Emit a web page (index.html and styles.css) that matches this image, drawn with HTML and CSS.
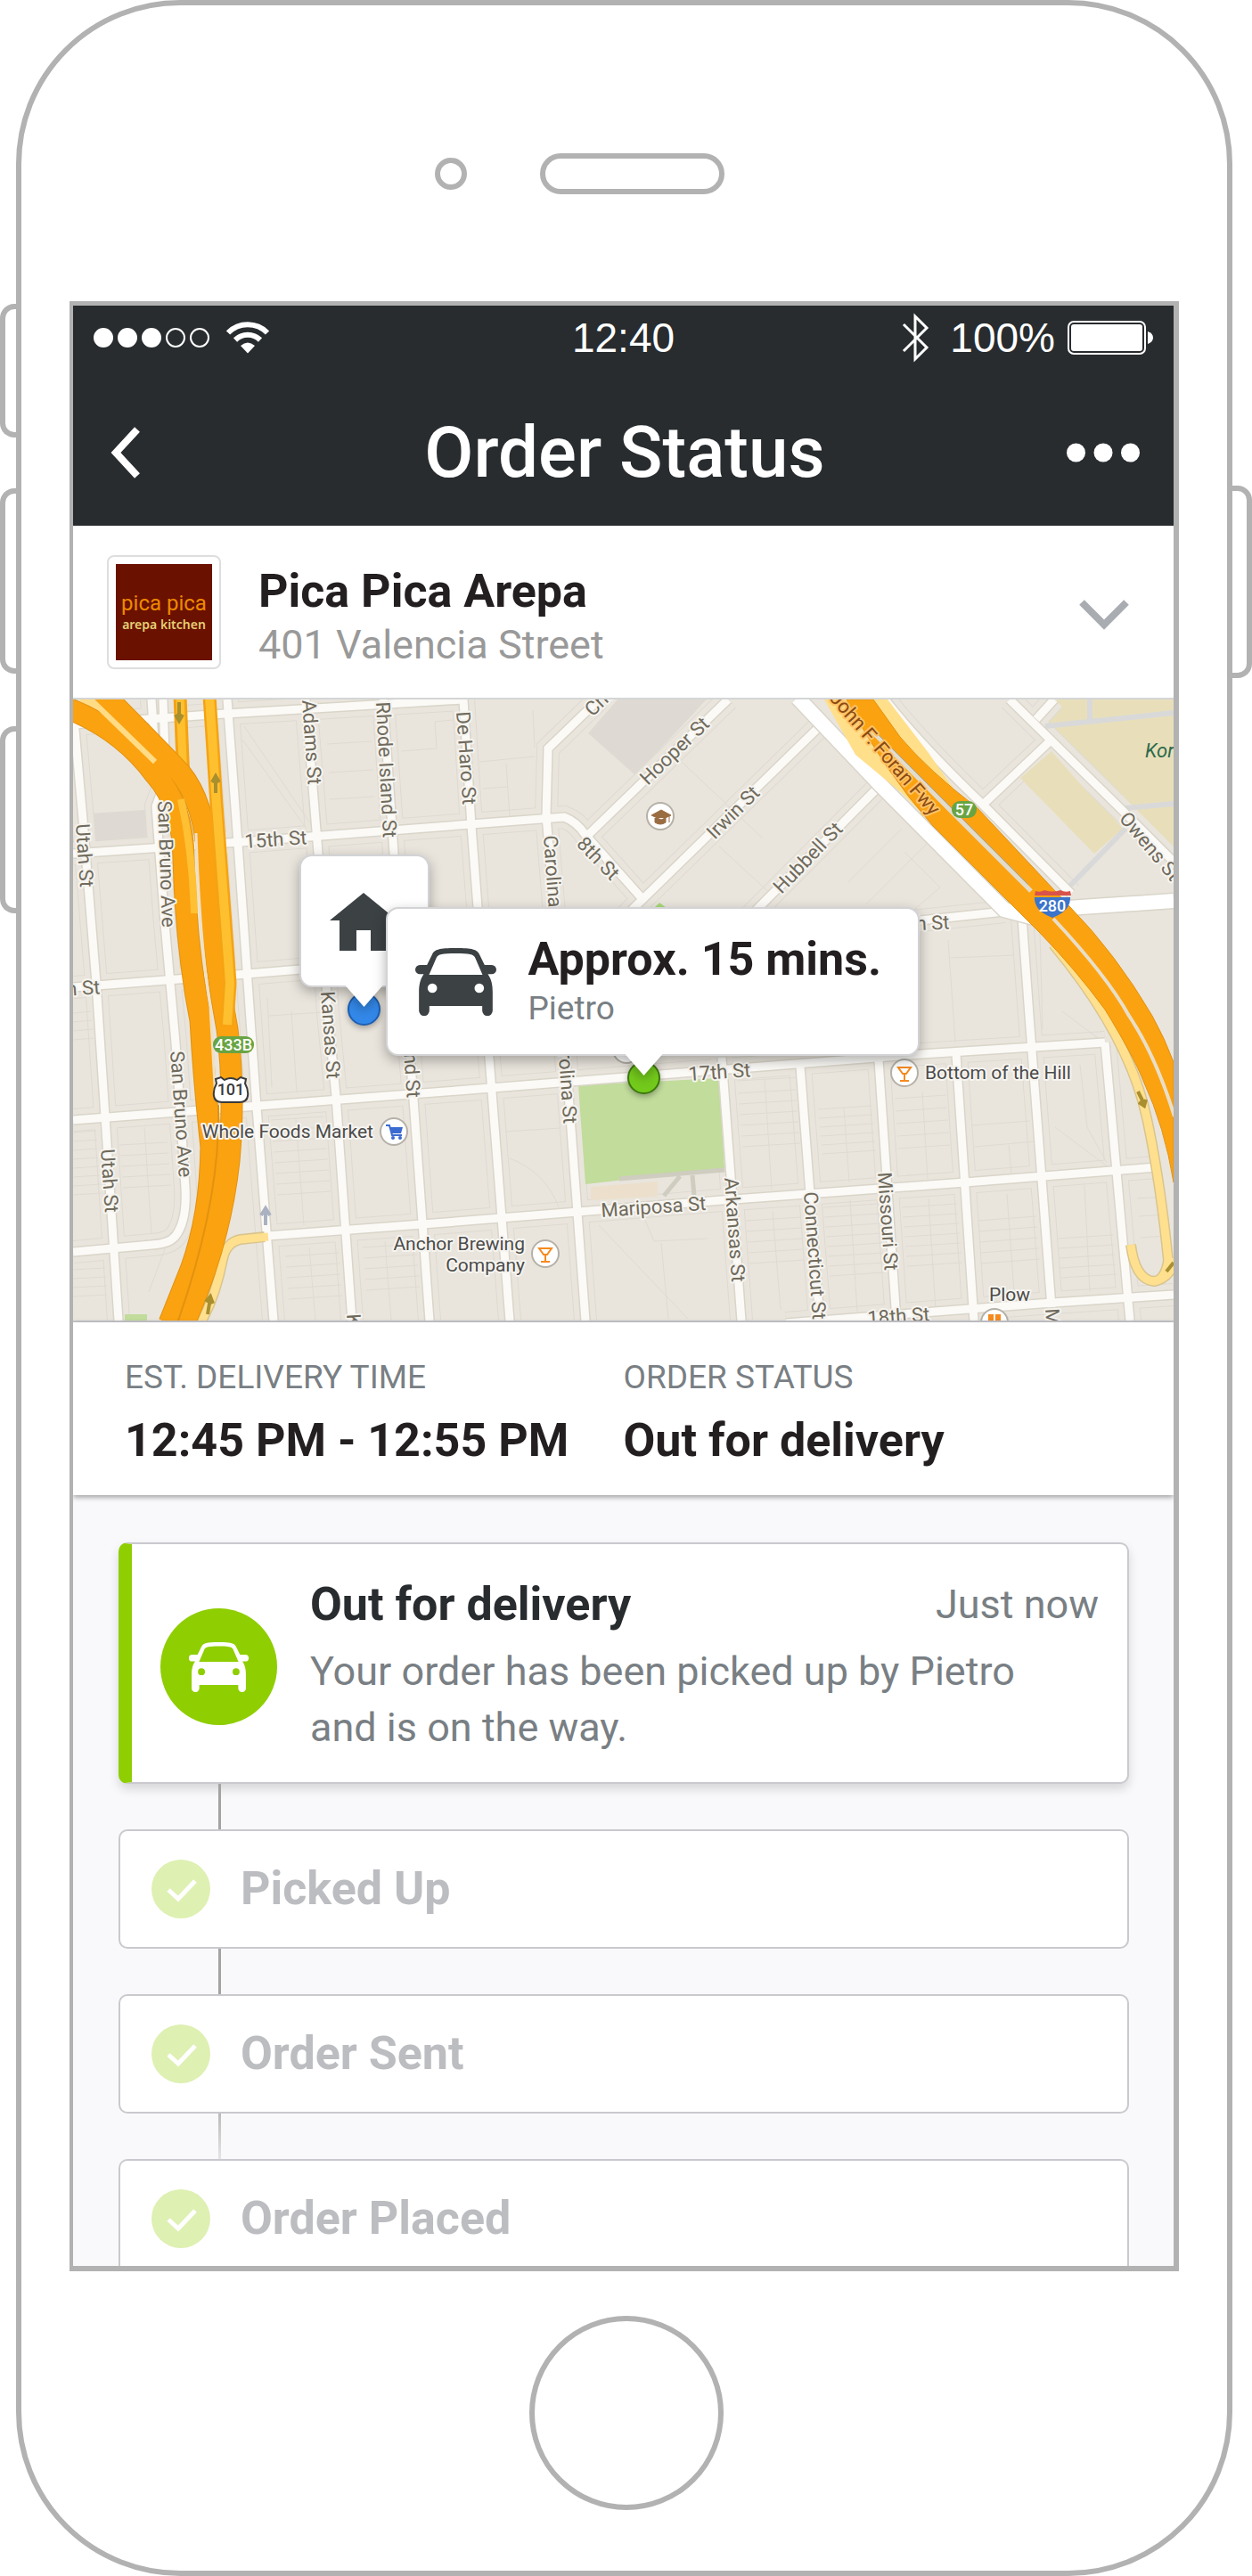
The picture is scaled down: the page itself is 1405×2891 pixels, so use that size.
FILE: index.html
```html
<!DOCTYPE html>
<html lang="en">
<head>
<meta charset="utf-8">
<meta name="viewport" content="width=device-width, initial-scale=1">
<title>Order Status</title>
<link rel="stylesheet" href="styles.css">
</head>
<body>
<svg width="0" height="0" class="sprite" aria-hidden="true">
  <symbol id="car" viewBox="0 0 272 228">
    <path fill-rule="evenodd" d="M136 0C80 0 65 5 57 20L39 57H15A15 15 0 0 0 15 88H28C15 108 12 125 12 150V211A17 17 0 0 0 47 211V195H225V211A17 17 0 0 0 260 211V150C260 125 257 108 244 88H257A15 15 0 0 0 257 57H233L215 20C207 5 192 0 136 0ZM136 18C90 18 76 21 71 32L46 90H226L201 32C196 21 182 18 136 18ZM41 135A16 16 0 1 0 73 135A16 16 0 1 0 41 135ZM199 135A16 16 0 1 0 231 135A16 16 0 1 0 199 135Z"/>
  </symbol>
  <symbol id="check" viewBox="0 0 66 66"><path d="M19 34L30 44L49 24" fill="none" stroke="#fff" stroke-width="5"/></symbol>
</svg>
<div class="phone">
  <span class="side side-mute"></span>
  <span class="side side-up"></span>
  <span class="side side-down"></span>
  <span class="side side-power"></span>
  <div class="earpiece"><span class="camera"></span><span class="speaker"></span></div>

  <main class="screen">
    <header class="topbar">
      <div class="status">
        <div class="status-left">
          <span class="signal"><i></i><i></i><i></i><i class="off"></i><i class="off"></i></span>
          <svg width="50" height="36" viewBox="0 0 50 36" fill="none" stroke="#fff" stroke-width="6"><path d="M3 12.500A31 31 0 0 1 47 12.500"/><path d="M11 20.500A20 20 0 0 1 39 20.500"/><path d="M17 27Q25 20 33 27L25 35.500Z" fill="#fff" stroke="none"/></svg>
        </div>
        <time class="clock">12:40</time>
        <div class="status-right">
          <svg width="32" height="56" viewBox="0 0 32 56" fill="none" stroke="#fff" stroke-width="3"><path d="M2 13L28 39L15 52V4L28 17L2 43"/></svg>
          <span class="percent">100%</span>
          <svg width="96" height="38" viewBox="0 0 96 38"><rect x="1" y="1" width="86" height="36" rx="6" fill="none" stroke="#fff" stroke-width="2"/><rect x="4" y="4" width="80" height="30" rx="3" fill="#fff"/><path d="M90 12Q96 14 96 19T90 26Z" fill="#fff"/></svg>
        </div>
      </div>
      <div class="nav">
        <button class="icon-btn" aria-label="Back"><svg width="36" height="58" viewBox="0 0 36 58"><path d="M31 3L7 29L31 55" fill="none" stroke="#fff" stroke-width="8"/></svg></button>
        <h1>Order Status</h1>
        <button class="icon-btn" aria-label="More"><svg width="82" height="22" viewBox="0 0 82 22" fill="#fff"><circle cx="10.500" cy="11" r="10.500"/><circle cx="41" cy="11" r="10.500"/><circle cx="71.500" cy="11" r="10.500"/></svg></button>
      </div>
    </header>

    <section class="restaurant">
      <div class="logo"><div class="logo-art"><span class="logo-name">pica pica</span><span class="logo-sub">arepa kitchen</span></div></div>
      <div class="who"><h2>Pica Pica Arepa</h2><p>401 Valencia Street</p></div>
      <button class="icon-btn" aria-label="Show details"><svg width="56" height="42" viewBox="0 0 56 42"><path d="M3 10L28 35L53 10" fill="none" stroke="#a9adb2" stroke-width="8"/></svg></button>
    </section>

    <section class="map" aria-label="Delivery map">
      <svg class="map-art" viewBox="0 0 1235 697" preserveAspectRatio="xMidYMid slice">
        <defs>
          <g id="streets">
            <path d="M-1 0L11 135L26 318L36 468L51 697"/>
            <path d="M88 0L92 60M101 0L104 90L93 120L103 252L115 385L126 548Q128 585 115 602Q108 611 88 612L0 620"/>
            <path d="M173 0L185 162L206 458L225 697"/>
            <path d="M261 0L275 172L286 352L295 445L313 697"/>
            <path d="M348 0L360 172L381 435L400 697"/>
            <path d="M438 0L447 142L467 402L490 697"/>
            <path d="M590 0L533 55L531 130L553 402L575 697"/>
            <path d="M728 402L738 535L750 697M816 412L838 697M904 405L924 697M991 398L1011 697"/>
            <path d="M1065 245L1073 355L1098 682M1158 385L1186 697"/>
            <path d="M0 28L155 17L438 0"/>
            <path d="M0 173L188 160L446 140L551 132Q565 137 575 152L640 225"/>
            <path d="M0 323L195 308L255 303L620 275L951 248L1045 238"/>
            <path d="M0 472L221 455L418 440L671 420L951 398L1158 385"/>
            <path d="M218 602L418 587L728 562L1001 542L1215 525"/>
            <path d="M800 700L928 690L1085 678L1235 668"/>
            <path d="M735 0L578 152M838 30L620 243M905 97L760 243"/>
            <path d="M911 0Q950 50 1021 118L1120 218M1021 118L1095 48M1051 0L1178 125L1235 182M1081 22L1101 0"/>
          </g>
        </defs>
        <rect width="1235" height="697" fill="#e9e5dd"/>
        <path d="M611 0H711L631 85L578 38ZM18 128L95 123V165L21 168Z" fill="#dedad3"/>
        <path d="M1098 53L1178 145L1146 173L1063 88ZM1085 22L1105 0H1235V175L1180 120Z" fill="#e8dfba"/>
        <use href="#streets" fill="none" stroke="#dedad1" stroke-width="26"/>
        <use href="#streets" fill="none" stroke="#e9e5dd" stroke-width="24"/>
        <path d="M1098 58L1170 140L1146 173L1063 88ZM1100 25L1115 0H1235V165L1180 110Z" fill="#e8dfba"/>
        <g class="lots">
          <path d="M0 352l20 -2m-20 12l21 -2m-21 12l22 -2m-22 12l23 -2M0 486l26 -2m-26 12l27 -2m-27 12l27 -2m-27 12l28 -2m-28 12l29 -2m-29 12l30 -2m-30 12l31 -2m-31 12l32 -2M0 640l36 -2m-36 12l37 -2m-37 12l38 -2m-38 12l38 -2"/>
          <path d="M52 500l54 -3m-53 15l54 -3m-53 15l54 -3m-53 15l54 -3m-53 15l54 -3M80 480l8 120M110 598L85 665"/>
          <path d="M222 472l60 -4m-59 16l60 -4m-59 16l60 -4m-59 16l60 -4m-59 16l60 -4m-59 16l60 -4m-59 16l60 -4m-59 16l60 -4M250 470l9 120M220 355l60 -4M218 335l5 100M245 350l6 90"/>
          <path d="M238 625l60 -4m-59 16l60 -4m-59 16l60 -4m-59 16l60 -4m-59 16l60 -4M265 615l7 82M325 615l60 -4m-59 16l60 -4m-59 16l60 -4m-59 16l60 -4m-59 16l60 -4M350 608l7 89"/>
          <path d="M192 30l75 110M190 45l72 100M285 50l50 -3M287 82l50 -3M288 112l50 -3M368 58l40 -3l-2 -30l20 -2"/>
          <path d="M456 70l62 -6M460 100l27 -2M486 72l4 60M516 12l2 42M485 485l62 -4M490 515Q530 530 545 570"/>
          <path d="M745 428l70 -4m-69 18l65 -4m-64 16l65 -4m-64 16l65 -4m-64 16l65 -4m-64 16l65 -4m-64 16l65 -4M776 425l8 125"/>
          <path d="M836 460l60 -4m-59 14l60 -4m-59 14l60 -4m-59 14l60 -4m-59 14l60 -4m-59 14l60 -4M865 458l6 84M842 570l62 -4m-61 15l62 -4m-61 15l62 -4m-61 15l62 -4m-61 15l62 -4m-61 15l62 -4m-61 15l62 -4m-61 15l62 -4M872 562l8 125"/>
          <path d="M922 448l58 -4m-57 18l58 -4m-57 18l58 -4m-57 18l58 -4m-57 18l58 -4M953 440l6 98M930 570l62 -4m-61 15l62 -4m-61 15l62 -4m-61 15l62 -4m-61 15l62 -4m-61 15l62 -4m-61 15l62 -4M960 560l8 125"/>
          <path d="M1008 478l66 -5M1012 502l68 -6M1050 500l3 32M1102 480l60 45M1130 410l8 70l22 40M1015 585l66 -5m-65 17l66 -5m-65 17l66 -5m-65 17l66 -5m-65 17l66 -5M1048 555l8 110"/>
          <path d="M1105 605l62 -4m-61 15l62 -4m-61 15l62 -4m-61 15l62 -4m-61 15l62 -4M1135 545l6 120M1194 560l30 -2M1196 580l30 -2M1198 604l30 -2"/>
          <path d="M755 585l62 -4m-61 16l62 -4m-61 16l62 -4m-61 16l62 -4m-61 16l62 -4M785 575l9 110M590 590l100 105M640 580l12 28l60 -3M660 610l8 85"/>
          <path d="M683 70l90 85M620 110l90 -85M725 165l60 55M870 205l60 -60M890 230l75 -75M945 235l28 -24l-40 -40M985 290l70 -3M982 270l8 115M1085 260l3 110M1110 350l40 30"/>
        </g>
        <path d="M567 433L725 425L731 526L575 544Z" fill="#c1dc9b"/>
        <path d="M581 547L656 541V558L581 562Z" fill="#ece0cc"/>
        <path d="M613 538L731 528M681 535L663 557M695 534L697 557" fill="none" stroke="#cfccc0" stroke-width="5"/>
        <rect x="58" y="690" width="25" height="8" fill="#c1dc9b"/>
        <path d="M652 234l6 -6l8 6z" fill="#a9d977"/>
        <g fill="none" stroke="#d9d9d9" stroke-width="6"><path d="M1091 30L1235 15M1141 0V24M1180 122L1235 117M1181 145L1118 210"/></g>
        <use href="#streets" fill="none" stroke="#dad5c9" stroke-width="12"/>
        <use href="#streets" fill="none" stroke="#fbfaf7" stroke-width="9"/>
        <path d="M813 -2L905 95L1045 236L1090 248M1060 238L1131 233L1235 226" fill="none" stroke="#dad5c9" stroke-width="19"/>
        <path d="M813 -2L905 95L1045 236L1090 248M1060 238L1131 233L1235 226" fill="none" stroke="#fff" stroke-width="16"/>

        <g fill="none" stroke-linejoin="round">
          <path d="M1100 275C1150 335 1190 400 1205 470C1218 530 1224 580 1229 630Q1225 652 1213 653Q1192 651 1187 612M1238 628Q1230 650 1213 653" stroke="#d9c48c" stroke-width="12"/>
          <path d="M1100 275C1150 335 1190 400 1205 470C1218 530 1224 580 1229 630Q1225 652 1213 653Q1192 651 1187 612M1238 628Q1230 650 1213 653" stroke="#ffe08f" stroke-width="9"/>
          <path d="M843 0L878 62L931 106L965 140L1020 140L988 100L960 60L914 0Z" fill="#ffdf8a" stroke="none"/>
          <path d="M868 0Q910 80 965 142L1085 262Q1125 303 1158 348Q1190 400 1201 428Q1225 480 1235 542V407Q1225 380 1211 355Q1170 285 1118 232L1015 122Q960 80 928 42L898 0Z" fill="#fba211" stroke="#e2920f"/>
          <path d="M896 35L985 125L1075 215" stroke="#e3dccb" stroke-width="5"/><path d="M900 36L1072 208" stroke="#a8a396" stroke-width="1"/>
          <path d="M1100 246Q1160 310 1185 355Q1215 400 1236 468" stroke="#e9dfc8" stroke-width="4"/>
          <path d="M215 603L188 606Q172 609 168 628Q160 670 143 700" stroke="#d9c48c" stroke-width="12"/>
          <path d="M219 603L188 606Q172 609 168 628Q160 670 143 700" stroke="#ffe08f" stroke-width="9"/>
          <path d="M10 -4L60 30L110 90L135 250" stroke="#ffdc85" stroke-width="12"/>
          <path d="M120 -4L124 92" stroke="#f5a313" stroke-width="15"/><path d="M120 -4L124 92" stroke="#ffc02f" stroke-width="9"/>
          <path d="M-6 10Q55 34 92 84Q124 120 124 180Q127 280 143 360Q147 430 155 502Q154 580 132 640L108 700" stroke="#e2920f" stroke-width="25"/>
          <path d="M28 -12Q80 40 120 82Q148 116 151 180Q156 280 173 370Q182 440 175 518Q165 610 125 700" stroke="#e2920f" stroke-width="25"/>
          <path d="M-6 10Q55 34 92 84Q124 120 124 180Q127 280 143 360Q147 430 155 502Q154 580 132 640L108 700" stroke="#fba211" stroke-width="23"/>
          <path d="M28 -12Q80 40 120 82Q148 116 151 180Q156 280 173 370Q182 440 175 518Q165 610 125 700" stroke="#fba211" stroke-width="23"/>
          <path d="M121 112Q134 170 136 240" stroke="#ffc033" stroke-width="8"/>
          <path d="M18 -2L92 70" stroke="#ffdc85" stroke-width="6"/>
          <path d="M138 150Q142 270 154 345L160 450" stroke="#f0e1c4" stroke-width="3"/>
          <path d="M163 455Q166 560 118 697" stroke="#e2920f" stroke-width="2"/>
          <path d="M153 -4L161 118L176 318L173 365" stroke="#f5a313" stroke-width="15"/><path d="M153 -4L161 118L176 318L173 365" stroke="#ffc02f" stroke-width="10"/>
        </g>
        <g fill="none" stroke="#a98f2e" stroke-width="4"><path d="M119 3V20M115 17l4 7l4 -7M160 105V88M156 93l4 -7l4 7M151 690l3 -18M149 676l5 -6l3 8M1195 440l7 14M1196 452l6 4l2 -7M1235 632l-8 10"/></g>
        <path d="M216 590V575M211 579l5 -8l5 8" fill="none" stroke="#aab2c2" stroke-width="4"/>

        <g class="street">
          <text transform="translate(3 140) rotate(86)">Utah St</text>
          <text transform="translate(31 505) rotate(86)">Utah St</text>
          <text transform="translate(95 114) rotate(88)">San Bruno Ave</text>
          <text transform="translate(109 395) rotate(86)">San Bruno Ave</text>
          <text transform="translate(257 1) rotate(86)">Adams St</text>
          <text transform="translate(340 3) rotate(87)">Rhode Island St</text>
          <text transform="translate(364 295) rotate(86)">Rhode Island St</text>
          <text transform="translate(430 14) rotate(86)">De Haro St</text>
          <text transform="translate(528 153) rotate(86)">Carolina St</text>
          <text transform="translate(543 370) rotate(86)">Carolina St</text>
          <text transform="translate(278 328) rotate(86)">Kansas St</text>
          <text transform="translate(731 537) rotate(86)">Arkansas St</text>
          <text transform="translate(820 553) rotate(86)">Connecticut St</text>
          <text transform="translate(903 531) rotate(86)">Missouri St</text>
          <text transform="translate(1091 684) rotate(86)">Mississippi St</text>
          <text transform="translate(307 690) rotate(86)">Kansas St</text>
          <text transform="translate(193 167) rotate(-4)">15th St</text>
          <text transform="translate(-39 335) rotate(-4)">16th St</text>
          <text transform="translate(914 261) rotate(-3)">16th St</text>
          <text transform="translate(691 428) rotate(-4)">17th St</text>
          <text transform="translate(593 581) rotate(-4)">Mariposa St</text>
          <text transform="translate(892 702) rotate(-4)">18th St</text>
          <text transform="translate(583 20) rotate(-44)">Channel St</text>
          <text transform="translate(645 97) rotate(-44)">Hooper St</text>
          <text transform="translate(720 158) rotate(-45)">Irwin St</text>
          <text transform="translate(795 219) rotate(-46)">Hubbell St</text>
          <text transform="translate(564 163) rotate(46)">8th St</text>
          <text transform="translate(1173 134) rotate(50)">Owens St</text>
          <text class="fwy" transform="translate(848 -1) rotate(49)">John F. Foran Fwy</text>
        </g>
        <text class="korean" x="1203" y="65">Koret</text>
        <g class="place">
          <text x="337" y="492" text-anchor="end">Whole Foods Market</text>
          <text x="507" y="618" text-anchor="end">Anchor Brewing</text>
          <text x="507" y="642" text-anchor="end">Company</text>
          <text x="956" y="426">Bottom of the Hill</text>
          <text x="1028" y="675">Plow</text>
        </g>
        <g fill="#fff" stroke="#b5b1a8" stroke-width="2">
          <circle cx="360" cy="485" r="15"/><circle cx="530" cy="622" r="15"/><circle cx="933" cy="419" r="15"/><circle cx="659" cy="131" r="15"/><circle cx="1034" cy="699" r="15"/><circle cx="621" cy="393" r="15"/>
        </g>
        <path d="M351 478h4l3 11h11" fill="none" stroke="#3a6bd0" stroke-width="2"/><path d="M356 480h14l-2 7h-10z" fill="#3a6bd0"/><circle cx="359" cy="492" r="2" fill="#3a6bd0"/><circle cx="367" cy="492" r="2" fill="#3a6bd0"/>
        <g fill="none" stroke="#f58a1f" stroke-width="2"><path id="glass" d="M523 616h14l-5 7h-4zM530 623v8M525 631h10"/><use href="#glass" x="403" y="-203"/></g>
        <path d="M1030 690v8M1038 690v8" stroke="#f58a1f" stroke-width="6"/>
        <path d="M649 130l11 -6l11 6l-11 5zM653 133v5q6 4 12 0v-5M669 131v7" fill="#9a6c42" stroke="#9a6c42"/>
        <rect x="986" y="114" width="28" height="19" rx="9" fill="#69a442"/>
        <rect x="157" y="378" width="46" height="19" rx="9" fill="#69a442"/>
        <path d="M160 426l6 -2l4 3q7 -4 14 0l4 -3l6 2l-1 5q4 7 3 14q-1 7 -9 7h-20q-8 0 -9 -7q-1 -7 3 -14z" fill="#fff" stroke="#3a3a3a" stroke-width="2"/>
        <path d="M1080 215q6 2 10 -1q9 3 18 0q5 3 11 1l1 5h-41z" fill="#d9534a"/><path d="M1079 222h40q1 15 -20 23q-21 -8 -20 -23z" fill="#3b74cb"/>
        <g class="badge"><text x="1000" y="130">57</text><text x="180" y="394">433B</text><text x="177" y="444" class="dark">101</text><text x="1099" y="238">280</text></g>
      </svg>
      <span class="dot dot-home"></span>
      <div class="callout callout-home">
        <svg width="76" height="66" viewBox="0 0 76 66" aria-label="Home"><path d="M38 0L76 31H65V65H46V42H30V65H11V31H0Z" fill="#3c4144"/></svg>
      </div>
      <span class="dot dot-driver"></span>
      <div class="callout callout-driver">
        <svg width="91" height="76" fill="#3c4144"><use href="#car"/></svg>
        <div><strong>Approx. 15 mins.</strong><span>Pietro</span></div>
      </div>
    </section>

    <dl class="summary">
      <div><dt>EST. DELIVERY TIME</dt><dd>12:45 PM - 12:55 PM</dd></div>
      <div><dt>ORDER STATUS</dt><dd>Out for delivery</dd></div>
    </dl>

    <ol class="timeline">
      <li>
        <article class="card current">
          <span class="bubble"><svg width="67" height="56" fill="#fff"><use href="#car"/></svg></span>
          <div class="card-text">
            <div class="card-head"><h3>Out for delivery</h3><time>Just now</time></div>
            <p>Your order has been picked up by Pietro and is on the way.</p>
          </div>
        </article>
      </li>
      <li><article class="card step"><svg class="tick" width="66" height="66"><use href="#check"/></svg><h3>Picked Up</h3></article></li>
      <li><article class="card step"><svg class="tick" width="66" height="66"><use href="#check"/></svg><h3>Order Sent</h3></article></li>
      <li class="fading"><article class="card step cut"><svg class="tick" width="66" height="66"><use href="#check"/></svg><h3>Order Placed</h3></article></li>
    </ol>
  </main>

  <button class="home-key" aria-label="Home button"></button>
</div>
</body>
</html>
```
FILE: styles.css
```css
* { box-sizing: border-box; }
body, h1, h2, h3, p, dl, dd, ol { margin: 0; padding: 0; }
body { background: #fff; font-family: Roboto, "Liberation Sans", sans-serif; color: #231f20; }
ol { list-style: none; }
button { border: 0; padding: 0; background: none; }
svg { display: block; flex: none; }
.sprite { position: absolute; }

/* Device outline */
.phone {
  position: relative;
  margin: 0 22px 0 18px;
  padding: 166px 54px 68px;
  border: 6px solid #b2b2b2;
  border-radius: 184px;
  display: flex;
  flex-direction: column;
}
.side { position: absolute; width: 24px; border: 6px solid #b2b2b2; background: #fff; }
.side-mute, .side-up, .side-down { left: -24px; border-radius: 16px 0 0 16px; border-right: 0; width: 18px; }
.side-mute { top: 335px; height: 150px; }
.side-up { top: 542px; height: 208px; }
.side-down { top: 809px; height: 210px; }
.side-power { right: -28px; top: 539px; height: 216px; width: 22px; border-left: 0; border-radius: 0 16px 16px 0; }
.earpiece {
  display: grid;
  grid-template-columns: 1fr auto 1fr;
  column-gap: 82px;
  align-items: center;
  padding-left: 18px;
  height: 46px;
}
.camera { justify-self: end; width: 36px; height: 36px; border: 6px solid #b2b2b2; border-radius: 50%; }
.speaker { width: 207px; height: 46px; border: 6px solid #b2b2b2; border-radius: 23px; }
.home-key { align-self: center; margin: 50px 0 0 4px; width: 218px; height: 218px; border: 6px solid #b2b2b2; border-radius: 50%; }

.screen { margin-top: 120px; border: solid #b2b2b2; border-width: 5px 6px 6px 4px; overflow: hidden; background: #f9f9fb; }

/* Top bar */
.topbar { background: #282c2f; color: #fff; height: 247px; }
.status { display: grid; grid-template-columns: 1fr auto 1fr; align-items: center; height: 72px; padding: 0 23px; font: 46px/48px "Liberation Sans", sans-serif; }
.status-left, .status-right { display: flex; align-items: center; }
.status-left { gap: 18px; }
.status-right { justify-content: flex-end; gap: 14px; }
.percent { margin-left: 8px; }
.signal { display: flex; gap: 5px; }
.signal i { width: 22px; height: 22px; border: 2px solid #fff; border-radius: 50%; background: #fff; }
.signal .off { background: none; }
.nav { display: flex; align-items: center; justify-content: space-between; height: 175px; padding: 10px 38px 0 41px; }
.nav .icon-btn { width: 82px; }
h1 { font-size: 80px; line-height: 88px; font-weight: 500; }

/* Restaurant */
.restaurant { display: flex; align-items: center; gap: 42px; padding: 33px 50px 32px 38px; background: #fff; border-bottom: 2px solid #d4d5d6; }
.logo { flex: none; width: 128px; height: 128px; padding: 8px; border: 2px solid #dedede; border-radius: 8px; }
.logo-art { height: 108px; background: #6b1100; display: flex; flex-direction: column; align-items: center; justify-content: center; white-space: nowrap; }
.logo-name { font-size: 24px; line-height: 28px; color: #ee8a00; }
.logo-sub { font: 600 14px/20px "Noto Sans", sans-serif; color: #e5ce74; }
.who { flex: 1; padding-top: 10px; }
h2 { font-size: 52px; line-height: 58px; }
.who p { margin-top: 6px; font-size: 45px; line-height: 50px; color: #999; }

/* Map */
.map { position: relative; height: 699px; overflow: hidden; border-bottom: 2px solid #c9c9ce; }
.map-art { width: 100%; height: 697px; }
.map text { font-family: Roboto, sans-serif; font-size: 22px; paint-order: stroke; stroke: #f6f4ef; stroke-width: 4px; stroke-linejoin: round; }
.lots { fill: none; stroke: #dfdad2; stroke-width: 1px; }
.street text { fill: #6f6a5c; }
.map .fwy { fill: #8a4b12; stroke: #ffc266; }
.map .korean { fill: #2d6a4c; font-style: italic; stroke: none; }
.map .place text { font-size: 21px; fill: #4b4b4b; }
.map .badge text { font-size: 18px; font-weight: 500; fill: #fff; stroke: none; text-anchor: middle; }
.map .badge .dark { fill: #3a3a3a; }

.dot { position: absolute; width: 37px; height: 37px; border-radius: 50%; box-shadow: 0 3px 6px rgba(0, 0, 0, .3); }
.dot-home { left: calc(50% - 310px); top: 329px; background: #3389ea; border: 2px solid #1d5fb4; }
.dot-driver { left: calc(50% + 4px); top: 406px; background: #74cb1c; border: 2px solid #3c7a0b; }
.callout { position: absolute; background: #fff; border: 2px solid #d3d3d6; border-radius: 14px; filter: drop-shadow(0 5px 7px rgba(0, 0, 0, .3)); }
.callout::after { content: ""; position: absolute; top: 100%; width: 42px; height: 24px; background: #fff; clip-path: polygon(0 0, 100% 0, 50% 100%); }
.callout-home { left: calc(50% - 364px); top: 174px; width: 146px; height: 149px; padding: 41px 32px; }
.callout-home::after { left: 50px; }
.callout-driver { left: calc(50% - 267px); top: 233px; width: 599px; height: 167px; display: flex; align-items: center; gap: 36px; padding: 0 31px; }
.callout-driver::after { left: 267px; }
.callout strong, .callout span { display: block; }
.callout strong { font-size: 52px; line-height: 60px; }
.callout span { font-size: 37px; line-height: 50px; color: #797f84; }

/* Summary */
.summary { position: relative; display: grid; grid-template-columns: 1fr 1fr; padding: 40px 58px 31px; background: #fff; box-shadow: 0 2px 6px rgba(0, 0, 0, .4); }
dt { font-size: 37px; line-height: 44px; color: #797f84; }
dd { margin-top: 19px; font-size: 52px; line-height: 60px; font-weight: 700; white-space: nowrap; }

/* Timeline */
.timeline { padding: 53px 50px 0 51px; }
.timeline li + li::before { content: ""; display: block; width: 3px; height: 51px; margin-left: 112px; background: #a3a3a3; }
.timeline .fading::before { background: linear-gradient(#bbb, #e4e4e6); }
.card { display: flex; align-items: center; background: #fff; border: 2px solid #c9c9ce; border-radius: 10px; }
.current { gap: 37px; padding: 38px 32px 30px; border-left: 15px solid #8fce00; box-shadow: 0 6px 12px rgba(0, 0, 0, .14); }
.bubble { flex: none; display: grid; place-items: center; width: 131px; height: 131px; border-radius: 50%; background: #8fce00; }
.card-text { flex: 1; color: #797f84; font-size: 45px; }
.card-head { display: flex; justify-content: space-between; line-height: 60px; }
h3 { font-size: 52px; line-height: 60px; }
.current h3 { color: #282c2f; }
.card-text p { margin-top: 13px; padding-right: 50px; line-height: 63px; }
.step { gap: 34px; height: 134px; padding: 0 35px; }
.step h3 { color: #bcbdc0; }
.tick { border-radius: 50%; background: #def0b2; }
.cut { align-items: flex-start; height: 120px; padding-top: 32px; border-bottom: 0; border-radius: 10px 10px 0 0; }
.cut h3 { padding-top: 3px; }
```
